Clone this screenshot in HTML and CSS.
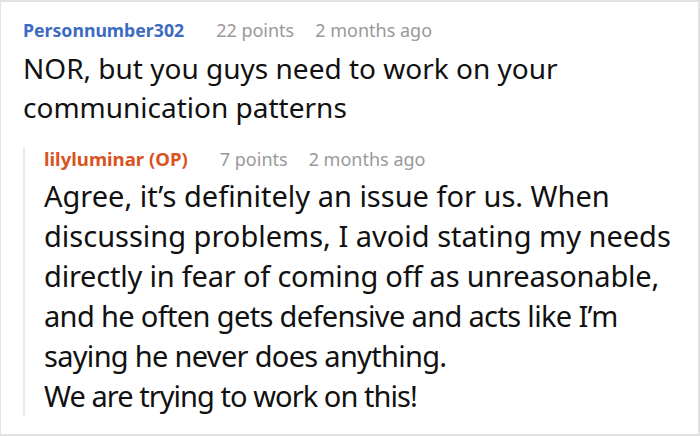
FILE: index.html
```html
<!DOCTYPE html>
<html>
<head>
<meta charset="utf-8">
<link rel="stylesheet" href="styles.css">
</head>
<body>
<div class="frame">
  <div class="comment">
    <div class="meta">
      <span class="user user-blue">Personnumber302</span>
      <span class="info">22 points</span>
      <span class="info">2 months ago</span>
    </div>
    <p class="text">NOR, but you guys need to work on your communication patterns</p>
    <div class="reply">
      <div class="meta">
        <span class="user user-orange">lilyluminar (OP)</span>
        <span class="info">7 points</span>
        <span class="info">2 months ago</span>
      </div>
      <p class="text">Agree, it’s definitely an issue for us. When<br>discussing problems, I avoid stating my needs<br><span class="tight-1">directly in fear of coming off as unreasonable,</span><br><span class="tight-2">and he often gets defensive and acts like I’m</span><br><span class="tight-3">saying he never does anything.</span><br><span class="tight-4">We are trying to work on this!</span></p>
    </div>
  </div>
</div>
</body>
</html>
```

FILE: styles.css
```css
html, body {
  margin: 0;
  padding: 0;
  background: #fff;
}
.frame {
  width: 700px;
  height: 436px;
  box-sizing: border-box;
  border: 2px solid #e2e2e2;
  border-left-width: 1px;
  overflow: hidden;
  font-family: "Noto Sans", "Open Sans", sans-serif;
  color: #111;
}
.comment {
  padding: 16px 20px 0 22px;
}
.meta {
  display: flex;
  gap: 21px;
  font-size: 18px;
  line-height: 24px;
}
.user {
  font-size: 17.7px;
  font-weight: 700;
  margin-right: 11px;
}
.reply .user {
  font-size: 18.6px;
}
.user-blue { color: #3b6bc0; }
.user-orange { color: #d9531e; }
.info { color: #999; }
.text {
  margin: 7px 0 0;
  font-size: 28px;
  line-height: 39px;
}
.reply {
  margin-top: 20px;
  border-left: 2px solid #ececec;
  padding-left: 19px;
}
.reply .text {
  margin-top: 5px;
  font-size: 29px;
  line-height: 40px;
  white-space: nowrap;
}
.tight-1 { letter-spacing: -0.2px; }
.tight-2 { letter-spacing: -0.65px; }
.tight-3 { letter-spacing: -0.7px; }
.tight-4 { letter-spacing: -0.95px; }
```
